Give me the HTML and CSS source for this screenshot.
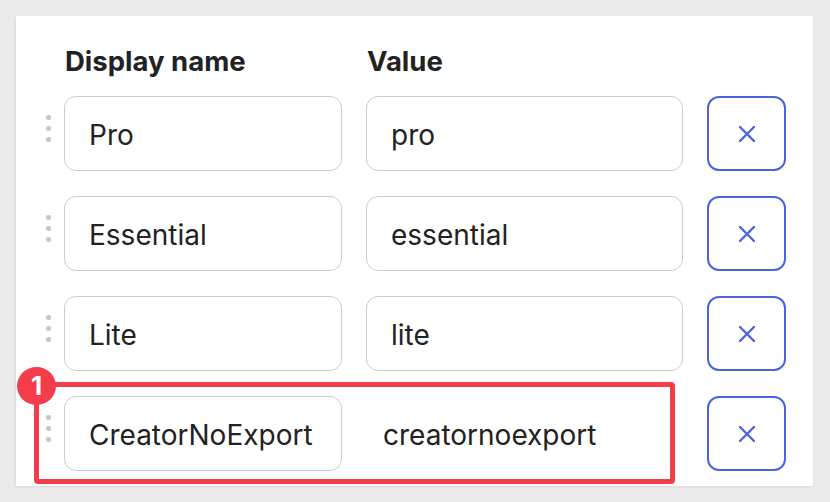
FILE: index.html
```html
<!DOCTYPE html>
<html>
<head>
<meta charset="utf-8">
<link rel="stylesheet" href="styles.css">
</head>
<body>
<div class="card">
  <div class="header">
    <div class="col-name">Display name</div>
    <div class="col-value">Value</div>
  </div>
  <div class="rows">
    <div class="row">
      <div class="handle"><span></span><span></span><span></span></div>
      <div class="field name">Pro</div>
      <div class="field value">pro</div>
      <button class="del"><svg viewBox="0 0 16 16" width="16" height="16"><path d="M1 1L15 15M15 1L1 15" stroke="currentColor" stroke-width="2.4" stroke-linecap="round"/></svg></button>
    </div>
    <div class="row">
      <div class="handle"><span></span><span></span><span></span></div>
      <div class="field name">Essential</div>
      <div class="field value">essential</div>
      <button class="del"><svg viewBox="0 0 16 16" width="16" height="16"><path d="M1 1L15 15M15 1L1 15" stroke="currentColor" stroke-width="2.4" stroke-linecap="round"/></svg></button>
    </div>
    <div class="row">
      <div class="handle"><span></span><span></span><span></span></div>
      <div class="field name">Lite</div>
      <div class="field value">lite</div>
      <button class="del"><svg viewBox="0 0 16 16" width="16" height="16"><path d="M1 1L15 15M15 1L1 15" stroke="currentColor" stroke-width="2.4" stroke-linecap="round"/></svg></button>
    </div>
    <div class="row">
      <div class="handle"><span></span><span></span><span></span></div>
      <div class="field name">CreatorNoExport</div>
      <div class="field value plain">creatornoexport</div>
      <button class="del"><svg viewBox="0 0 16 16" width="16" height="16"><path d="M1 1L15 15M15 1L1 15" stroke="currentColor" stroke-width="2.4" stroke-linecap="round"/></svg></button>
    </div>
  </div>
  <div class="highlight"></div>
  <div class="badge">1</div>
</div>
</body>
</html>
```
FILE: styles.css
```css
* { box-sizing: border-box; }
html, body { margin: 0; padding: 0; }
body {
  background: #ebebeb;
  font-family: Inter, "Noto Sans", sans-serif;
  color: #222;
  width: 830px;
  height: 502px;
  overflow: hidden;
}
.card {
  position: relative;
  margin: 16px 0 0 16px;
  width: 797px;
  height: 470px;
  background: #fff;
  box-shadow: -1px 1px 3px rgba(0,0,0,0.08);
  padding: 28px 0 0 48px;
}
.header {
  display: grid;
  grid-template-columns: 278px 317px;
  column-gap: 24px;
  font-size: 27.5px;
  font-weight: 700;
  line-height: 34px;
  padding-left: 1px;
}
.rows {
  margin-top: 18px;
  margin-left: -48px;
  display: flex;
  flex-direction: column;
  gap: 25px;
}
.row {
  display: flex;
  align-items: center;
  height: 75px;
}
.handle {
  width: 48px;
  padding-left: 30px;
  display: flex;
  flex-direction: column;
  gap: 6.5px;
  margin-top: -10px;
}
.handle span {
  width: 4.5px;
  height: 4.5px;
  border-radius: 50%;
  background: #c6c6c6;
}
.field {
  height: 75px;
  border: 1.5px solid #cccccc;
  border-radius: 12px;
  font-size: 28px;
  display: flex;
  align-items: center;
  padding: 3px 0 0 24px;
  white-space: nowrap;
}
.field.name { width: 278px; }
.field.value { width: 317px; margin-left: 24px; }
.field.plain { border-color: transparent; padding-left: 16px; }
.del {
  margin-left: 24px;
  width: 79px;
  height: 75px;
  border: 2px solid #4b63dc;
  border-radius: 12px;
  background: #fff;
  color: #4b63dc;
  display: flex;
  align-items: center;
  justify-content: center;
  padding: 0;
}
.highlight {
  position: absolute;
  left: 18px;
  top: 366px;
  width: 641px;
  height: 102px;
  border: 5px solid #f43d4b;
  border-radius: 4px;
}
.badge {
  position: absolute;
  left: 1px;
  top: 351px;
  width: 39px;
  height: 38px;
  border-radius: 50%;
  background: #f43d4b;
  color: #fff;
  font-size: 26px;
  font-weight: 700;
  display: flex;
  align-items: center;
  justify-content: center;
  line-height: 1;
}
```
